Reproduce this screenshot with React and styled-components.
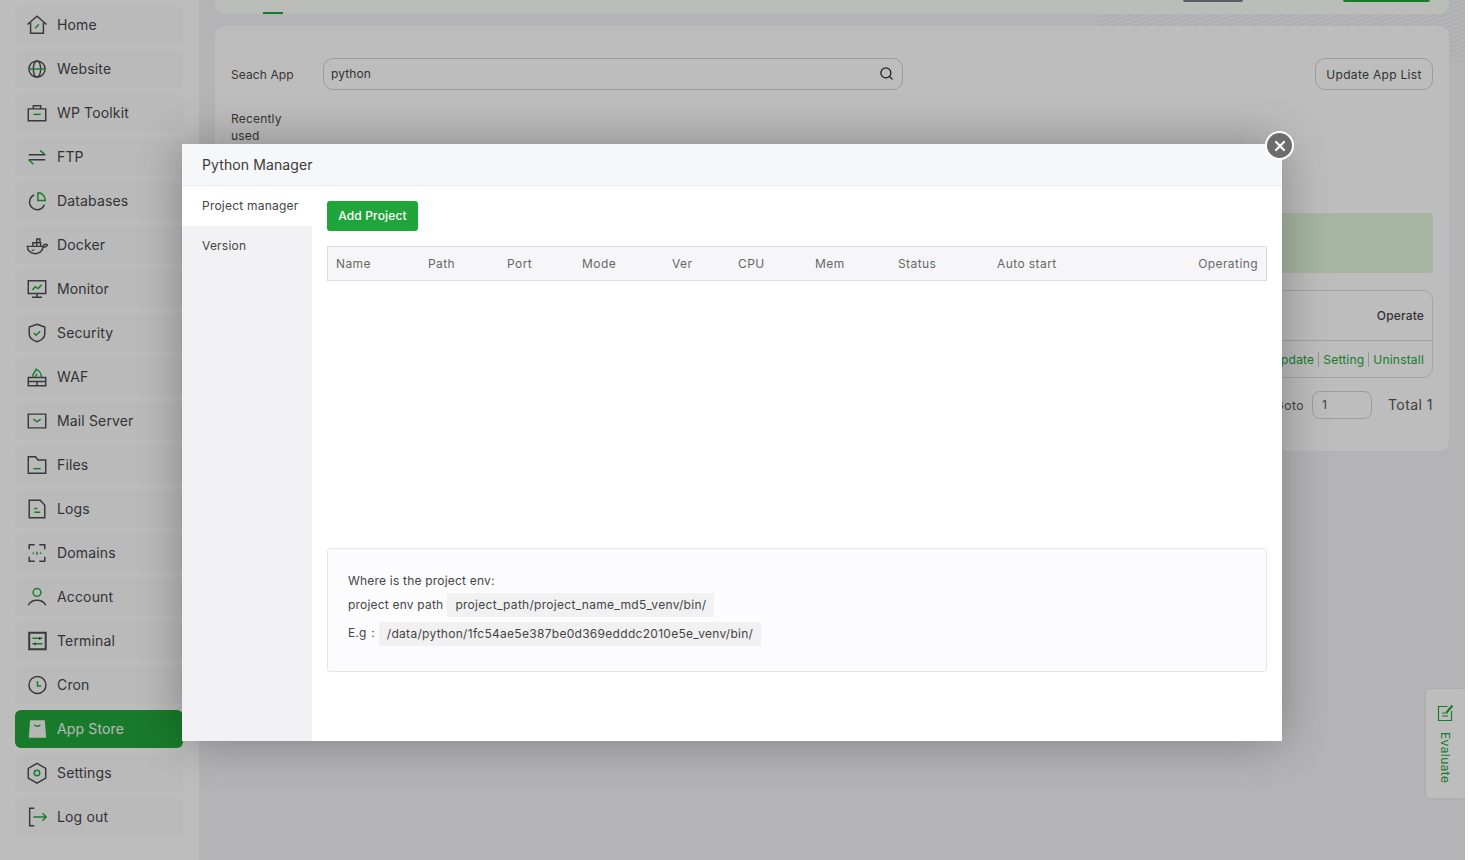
import React from "react";
import styled, { createGlobalStyle } from "styled-components";
import { Search, X } from "lucide-react";

const GlobalStyle = createGlobalStyle`
  html, body {
    margin: 0;
    background: #fff;
    overflow: hidden;
  }
  body {
    font-family: Inter, "Liberation Sans", "Noto Sans", sans-serif;
    color: #333;
  }
`;

const icons = {
  home: (
    <>
      <path className="g" d="M1.5 11.5 12 2.5l10.5 9M5 9.5V21h14V9.5" />
      <path className="a" d="m10 15.5 4-4" />
    </>
  ),
  website: (
    <>
      <circle className="g" cx="12" cy="12" r="8.8" />
      <ellipse className="g" cx="12" cy="12" rx="4" ry="8.8" />
      <path className="a" d="M3.2 12h17.6" />
    </>
  ),
  toolkit: (
    <>
      <path className="g" d="M2.5 7.5h19v13h-19zM8 7.5V4h8v3.5" />
      <path className="a" d="M8 13.5h8" />
    </>
  ),
  ftp: (
    <>
      <path className="g" d="M3 9.5h18M3 15h18" />
      <path className="a" d="m21 9.5-5.500-4.500M3 15l5 5" />
    </>
  ),
  databases: (
    <>
      <path className="g" d="M9 5.500a8.300 8.300 0 1 0 11 10.500" />
      <path className="a" d="M13 3c4.500 0 8 3.500 8 8.500h-8z" />
    </>
  ),
  docker: (
    <>
      <path className="g" d="M1.500 13.500h17c0 5-4 8-8.500 8s-8.500-3-8.500-8zM7.500 13.500V9.500h8.500v4M11.700 13.500v-8h3.500v4M18.500 13.500c.5-2 3-3 5-1.500-1 2-3 2.500-5 2" />
      <path className="a" d="m6 18.500 3-1.500" />
    </>
  ),
  monitor: (
    <>
      <path className="g" d="M2.500 3h19v14h-19zM12 17v4M6.500 21h11" />
      <path className="a" d="m7 13 3-3.500 3 2 4-4" />
    </>
  ),
  security: (
    <>
      <path className="g" d="M12 2.500 20.500 5.500V13c0 4-3.800 6.800-8.500 8.500C7.300 19.800 3.500 17 3.500 13V5.500z" />
      <path className="a" d="m8.500 12 2.500 2.500 4.500-4.500" />
    </>
  ),
  waf: (
    <>
      <path className="g" d="M2.500 12.500h19v9h-19zM2.500 17h19M12 17v4.500" />
      <path className="a" d="M7.500 12.500c-1.500-3.500 2-4.500 3.500-9 3 1.500 6.500 5 5.500 9M10.500 12.500c-.5-1.500 1-2.500 1.500-4" />
    </>
  ),
  mail: (
    <>
      <path className="g" d="M2.500 4.500h19v15h-19z" />
      <path className="a" d="m8 10 4 3 4-3" />
    </>
  ),
  files: (
    <>
      <path className="g" d="M2.500 3h8l2.500 3.500h8.500V21h-19z" />
      <path className="a" d="M8 16h8" />
    </>
  ),
  logs: (
    <>
      <path className="g" d="M3.500 2.500h12l5 5.500v13.500h-17z" />
      <path className="a" d="M9 11.500h3.500M9 15.500h6.500" />
    </>
  ),
  domains: (
    <>
      <path className="g" d="M3.500 8V3h6M14.500 3h6v5M3.500 16v5h6M14.500 21h6v-5" />
      <path className="a" d="M8 11.500v1.500M12 10.500v3.500M16 11.500v1.500" />
    </>
  ),
  account: (
    <>
      <circle className="a" cx="12" cy="7" r="4.200" />
      <path className="g" d="M2.500 21c2-4 5.500-5.500 9.500-5.500s7.500 1.500 9.500 5.500" />
    </>
  ),
  terminal: (
    <>
      <path className="g thick" d="M3.500 3h18v18h-18z" />
      <path className="a" d="M7 9h11M7 15h11" />
      <path className="g" d="M15 7.500v3M10 13.500v3" />
    </>
  ),
  cron: (
    <>
      <circle className="g" cx="12.500" cy="12" r="9.300" />
      <path className="a" d="M12.500 7.500V13h4" />
    </>
  ),
  store: (
    <>
      <path className="solid" d="M4.500 2.500h16l1.500 19H3z" />
      <path className="dip" d="M9 7.500c1.500 2 5 2 6.500 0" />
    </>
  ),
  settings: (
    <>
      <path className="g" d="M12 1.500 21.500 7v10.500L12 23l-9.500-5.500V7z" />
      <circle className="a" cx="12" cy="12" r="3" />
    </>
  ),
  logout: (
    <>
      <path className="g" d="M9 2.500H4v19h5" />
      <path className="a" d="M8 12h14M18 8l4 4-4 4" />
    </>
  ),
};

const menu = [
  ["home", "Home"],
  ["website", "Website"],
  ["toolkit", "WP Toolkit"],
  ["ftp", "FTP"],
  ["databases", "Databases"],
  ["docker", "Docker"],
  ["monitor", "Monitor"],
  ["security", "Security"],
  ["waf", "WAF"],
  ["mail", "Mail Server"],
  ["files", "Files"],
  ["logs", "Logs"],
  ["domains", "Domains"],
  ["account", "Account"],
  ["terminal", "Terminal"],
  ["cron", "Cron"],
  ["store", "App Store"],
  ["settings", "Settings"],
  ["logout", "Log out"],
];

const columns = ["Name", "Path", "Port", "Mode", "Ver", "CPU", "Mem", "Status", "Auto start", "Operating"];

const App = () => (
  <>
    <GlobalStyle />
    <Page>
      <Sidebar>
        {menu.map(([icon, label]) => (
          <MenuItem key={label} $active={label === "App Store"}>
            <MenuIcon viewBox="0 0 24 24">{icons[icon]}</MenuIcon>
            {label}
          </MenuItem>
        ))}
      </Sidebar>

      <Main>
        <TopBar>
          <TabMark />
          <TopActions>
            <CutButton $grey />
            <CutButton />
          </TopActions>
        </TopBar>

        <Card>
          <SearchRow>
            <FieldLabel>Seach App</FieldLabel>
            <SearchBox>
              python
              <Search size={15} strokeWidth={2} color="#222" />
            </SearchBox>
            <UpdateButton>Update App List</UpdateButton>
          </SearchRow>

          <RecentRow>
            <RecentLabel>Recently used</RecentLabel>
          </RecentRow>

          <Banner />

          <AppTable>
            <AppHead>Operate</AppHead>
            <AppRow>
              <RowLink>Update</RowLink>
              <RowLink>Setting</RowLink>
              <RowLink>Uninstall</RowLink>
            </AppRow>
          </AppTable>

          <Pager>
            <span>Goto</span>
            <PageInput>1</PageInput>
            <PageTotal>Total 1</PageTotal>
          </Pager>
        </Card>
      </Main>

      <Evaluate>
        <svg width="18" height="18" viewBox="0 0 18 18" fill="none" stroke="#20a53a" strokeWidth="1.2">
          <path d="M14.500 7v9.500h-13v-14h9M5 9h6M5 12h6" />
          <path d="m9.500 8.500 6-7" strokeWidth="2.200" />
        </svg>
        <EvaluateText>Evaluate</EvaluateText>
      </Evaluate>

      <Shade />

      <Modal>
        <ModalTitle>Python Manager</ModalTitle>
        <ModalBody>
          <ModalNav>
            <NavTab $active>Project manager</NavTab>
            <NavTab>Version</NavTab>
          </ModalNav>
          <ModalContent>
            <AddButton>Add Project</AddButton>
            <TableArea>
              <ProjectHead>
                {columns.map((name) => (
                  <HeadCell key={name}>{name}</HeadCell>
                ))}
              </ProjectHead>
            </TableArea>
            <InfoBox>
              <InfoLine>Where is the project env:</InfoLine>
              <InfoLine>
                project env path <Chip>project_path/project_name_md5_venv/bin/</Chip>
              </InfoLine>
              <InfoLine>
                E.g： <Chip $pull>/data/python/1fc54ae5e387be0d369edddc2010e5e_venv/bin/</Chip>
              </InfoLine>
            </InfoBox>
          </ModalContent>
        </ModalBody>
        <CloseButton>
          <X size={16} strokeWidth={3.2} color="#fff" />
        </CloseButton>
      </Modal>
    </Page>
  </>
);

const Page = styled.div`
  position: relative;
  display: flex;
  width: 1465px;
  height: 860px;
  overflow: hidden;
  background-color: #f1f1f4;
`;

const Sidebar = styled.nav`
  flex: 0 0 199px;
  box-sizing: border-box;
  padding: 6px 16px 0 15px;
  display: flex;
  flex-direction: column;
  gap: 6px;
  background: #fcfcfe;
`;

const MenuItem = styled.div`
  flex: 0 0 38px;
  box-sizing: border-box;
  display: flex;
  align-items: center;
  gap: 9px;
  padding: 0 0 2px 11px;
  border-radius: 6px;
  font-size: 14px;
  letter-spacing: 0.15px;
  background: ${(p) => (p.$active ? "#20a53a" : "#f8f8fa")};
  color: ${(p) => (p.$active ? "#f2f7f2" : "#454548")};
`;

const MenuIcon = styled.svg`
  width: 22px;
  height: 22px;
  margin-top: 1px;
  fill: none;
  stroke-width: 1.6;

  .g {
    stroke: #4c4c50;
  }
  .thick {
    stroke-width: 2.2;
  }
  .a {
    stroke: #20a53a;
  }
  .solid {
    fill: #f0f5f0;
  }
  .dip {
    stroke: #20a53a;
  }
`;

const Main = styled.main`
  flex: 1;
  min-width: 0;
  box-sizing: border-box;
  padding: 0 16px;
  display: flex;
  flex-direction: column;
  background-image: repeating-linear-gradient(
    160deg,
    #e4e6ea 0 1px,
    transparent 1px 4px
  );
  background-size: 366px 62px;
  background-position: top right;
  background-repeat: no-repeat;
`;

const TopBar = styled.div`
  height: 14px;
  margin-bottom: 12px;
  display: flex;
  justify-content: space-between;
  border-radius: 0 0 10px 10px;
  background: #fafcf6;
`;

const TabMark = styled.div`
  align-self: flex-end;
  width: 20px;
  height: 2px;
  margin-left: 48px;
  background: #20a53a;
`;

const TopActions = styled.div`
  display: flex;
  gap: 100px;
  margin-right: 19px;
`;

const CutButton = styled.div`
  height: 2px;
  width: ${(p) => (p.$grey ? "60px" : "87px")};
  border-radius: 0 0 4px 4px;
  background: ${(p) => (p.$grey ? "#7c7c86" : "#20a53a")};
`;

const Card = styled.section`
  padding: 32px 16px;
  border-radius: 10px;
  background: #fdfdfd;
`;

const SearchRow = styled.div`
  display: flex;
  align-items: center;
  height: 32px;
`;

const FieldLabel = styled.div`
  width: 92px;
  font-size: 12px;
  letter-spacing: 0.1px;
  color: #4a4a4a;
`;

const SearchBox = styled.div`
  box-sizing: border-box;
  width: 580px;
  height: 32px;
  padding: 0 8px 2px 7px;
  display: flex;
  align-items: center;
  justify-content: space-between;
  border: 1px solid #cfcfd2;
  border-radius: 10px;
  font-size: 12px;
  letter-spacing: 0.1px;
  color: #444;
`;

const UpdateButton = styled.div`
  box-sizing: border-box;
  width: 118px;
  height: 32px;
  margin-left: auto;
  display: flex;
  align-items: center;
  justify-content: center;
  border: 1px solid #cfcfd2;
  border-radius: 10px;
  font-size: 12px;
  letter-spacing: 0.3px;
  color: #444;
`;

const RecentRow = styled.div`
  height: 103px;
  margin-top: 20px;
`;

const RecentLabel = styled.div`
  width: 70px;
  font-size: 12px;
  line-height: 17px;
  letter-spacing: 0.2px;
  color: #4a4a4a;
`;

const Banner = styled.div`
  height: 60px;
  border-radius: 3px;
  background: #e0f2d8;
`;

const AppTable = styled.div`
  box-sizing: border-box;
  height: 88px;
  margin-top: 17px;
  border: 1px solid #dcdcde;
  border-radius: 10px;
  overflow: hidden;
`;

const AppHead = styled.div`
  box-sizing: border-box;
  height: 50px;
  padding-right: 8px;
  display: flex;
  align-items: center;
  justify-content: flex-end;
  border-bottom: 1px solid #d8d8da;
  font-size: 12px;
  font-weight: 500;
  letter-spacing: 0.15px;
  color: #444;
`;

const AppRow = styled.div`
  height: 36px;
  padding-right: 8px;
  display: flex;
  align-items: center;
  justify-content: flex-end;
`;

const RowLink = styled.span`
  padding: 0 4px;
  border-left: 1px solid #c9c9c9;
  font-size: 12px;
  line-height: 15px;
  letter-spacing: 0.2px;
  color: #20a53a;

  &:first-child {
    border-left: 0;
  }
  &:last-child {
    padding-right: 0;
  }
`;

const Pager = styled.div`
  height: 28px;
  margin-top: 13px;
  display: flex;
  align-items: center;
  justify-content: flex-end;
  font-size: 12px;
  letter-spacing: 0.5px;
  color: #555;
`;

const PageInput = styled.div`
  box-sizing: border-box;
  width: 60px;
  height: 28px;
  margin: 0 16px 0 8px;
  padding: 0 0 2px 9px;
  display: flex;
  align-items: center;
  border: 1px solid #d0d0d2;
  border-radius: 8px;
`;

const PageTotal = styled.span`
  padding-bottom: 2px;
  font-size: 14px;
  letter-spacing: 0.45px;
`;

const Shade = styled.div`
  position: absolute;
  inset: 0;
  background: rgba(0, 0, 0, 0.25);
`;

const Modal = styled.div`
  position: absolute;
  left: 182px;
  top: 144px;
  width: 1100px;
  height: 597px;
  display: flex;
  flex-direction: column;
  background: #fff;
  box-shadow: 0 0 45px rgba(0, 0, 0, 0.3);
`;

const ModalTitle = styled.div`
  flex: 0 0 41px;
  padding-left: 20px;
  display: flex;
  align-items: center;
  border-bottom: 1px solid #ebebed;
  font-size: 14px;
  letter-spacing: 0.1px;
  color: #3a3a3a;
  background: #f6f7f9;
`;

const ModalBody = styled.div`
  flex: 1;
  display: flex;
  min-height: 0;
`;

const ModalNav = styled.div`
  flex: 0 0 130px;
  background: #f2f2f4;
`;

const NavTab = styled.div`
  box-sizing: border-box;
  height: 40px;
  padding: 0 0 2px 20px;
  display: flex;
  align-items: center;
  font-size: 12px;
  letter-spacing: 0.22px;
  color: #444;
  background: ${(p) => (p.$active ? "#fff" : "transparent")};
`;

const ModalContent = styled.div`
  flex: 1;
  padding: 15px;
`;

const AddButton = styled.div`
  box-sizing: border-box;
  width: 91px;
  height: 30px;
  padding-bottom: 2px;
  display: flex;
  align-items: center;
  justify-content: center;
  border-radius: 3px;
  font-size: 12px;
  font-weight: 500;
  letter-spacing: 0.15px;
  color: #fff;
  background: #20a53a;
`;

const TableArea = styled.div`
  height: 302px;
  margin-top: 15px;
`;

const ProjectHead = styled.div`
  box-sizing: border-box;
  height: 35px;
  display: grid;
  grid-template-columns: 92px 79px 75px 90px 66px 77px 83px 99px 1fr 110px;
  align-items: center;
  border: 1px solid #dcdcde;
  background: #f6f6f8;
`;

const HeadCell = styled.div`
  padding: 0 8px;
  font-size: 12px;
  letter-spacing: 0.42px;
  color: #666;

  &:last-child {
    text-align: right;
  }
`;

const InfoBox = styled.div`
  box-sizing: border-box;
  height: 124px;
  padding: 20px 20px 0;
  border: 1px solid #e6e6e8;
  border-radius: 3px;
  background: #fcfcfe;
`;

const InfoLine = styled.div`
  box-sizing: border-box;
  height: 29px;
  display: flex;
  align-items: center;
  gap: 4px;
  font-size: 12px;
  letter-spacing: 0.2px;
  color: #444;

  &:first-child {
    height: 21px;
    padding-top: 2px;
  }
`;

const Chip = styled.span`
  padding: 0 8px;
  height: 24px;
  margin-left: ${(p) => (p.$pull ? "-4px" : "0")};
  display: inline-flex;
  align-items: center;
  letter-spacing: 0.29px;
  background: #f1f1f2;
  color: #444;
`;

const CloseButton = styled.div`
  position: absolute;
  top: -13px;
  right: -12px;
  box-sizing: border-box;
  width: 29px;
  height: 29px;
  display: flex;
  align-items: center;
  justify-content: center;
  border: 2px solid #fff;
  border-radius: 50%;
  background: #6c6c6c;
`;

const Evaluate = styled.div`
  position: absolute;
  right: 0;
  top: 689px;
  box-sizing: border-box;
  width: 39px;
  height: 109px;
  padding-top: 15px;
  display: flex;
  flex-direction: column;
  align-items: center;
  gap: 10px;
  border-radius: 4px 0 0 4px;
  background: #fdfdfd;
  box-shadow: 0 0 4px rgba(0, 0, 0, 0.08);
`;

const EvaluateText = styled.span`
  writing-mode: vertical-rl;
  font-size: 12px;
  letter-spacing: 0.4px;
  color: #20a53a;
`;

export default App;
